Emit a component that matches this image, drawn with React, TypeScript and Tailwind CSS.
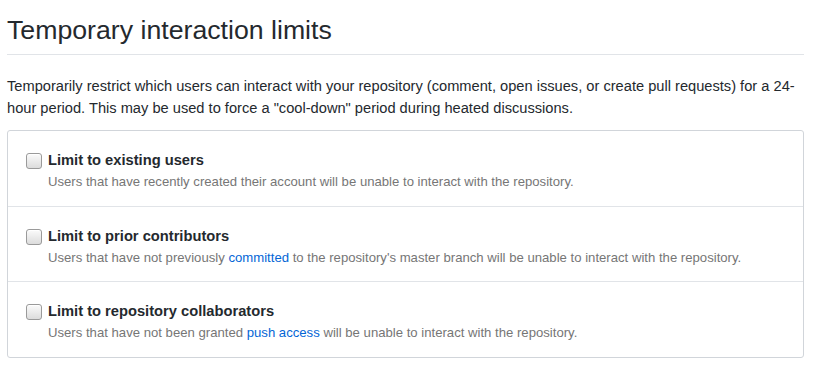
import { ReactNode } from 'react';

interface LimitOptionProps {
  title: string;
  children: ReactNode;
  className?: string;
}

function FakeCheckbox() {
  return (
    <span className="mt-[3px] block h-[16px] w-[16px] shrink-0 rounded-[3px] border border-[#9a9a9a] bg-gradient-to-b from-[#fbfbfb] to-[#dcdcdc] shadow-[inset_0_1px_0_#fff]" />
  );
}

function LimitOption({ title, children, className = 'pb-[15px] border-b border-[#e1e4e8]' }: LimitOptionProps) {
  return (
    <div className={`pl-[18px] pr-4 pt-[19px] ${className}`}>
      <label className="flex items-start gap-[6px]">
        <FakeCheckbox />
        <div>
          <div className="text-[14.7px] leading-[21px] font-bold text-[#24292e]">{title}</div>
          <p className="mt-[2px] text-[13.15px] leading-[18px] text-[#767676]">{children}</p>
        </div>
      </label>
    </div>
  );
}

export default function App() {
  return (
    <div
      className="min-h-[374px] bg-white pl-[7px] pt-[12px]"
      style={{ fontFamily: '"Liberation Sans", Arial, sans-serif' }}
    >
      <div className="w-[797px]">
        {/* Subhead */}
        <div className="border-b border-[#e1e4e8] pb-[6px]">
          <h2 className="text-[26.7px] leading-[36px] font-normal text-[#24292e]">Temporary interaction limits</h2>
        </div>

        <p className="mt-[21px] text-[14.65px] leading-[21.5px] text-[#24292e]">
          Temporarily restrict which users can interact with your repository (comment, open issues, or create pull
          requests) for a 24-hour period. This may be used to force a "cool-down" period during heated discussions.
        </p>

        {/* Options box */}
        <div className="mt-[11px] rounded-[3px] border border-[#d1d5da]">
          <LimitOption title="Limit to existing users">
            Users that have recently created their account will be unable to interact with the repository.
          </LimitOption>
          <LimitOption title="Limit to prior contributors" className="pb-[14px] border-b border-[#e1e4e8]">
            Users that have not previously <a className="text-[#0366d6]">committed</a> to the repository's master
            branch will be unable to interact with the repository.
          </LimitOption>
          <LimitOption title="Limit to repository collaborators" className="pb-[15px]">
            Users that have not been granted <a className="text-[#0366d6]">push access</a> will be unable to interact
            with the repository.
          </LimitOption>
        </div>
      </div>
    </div>
  );
}
